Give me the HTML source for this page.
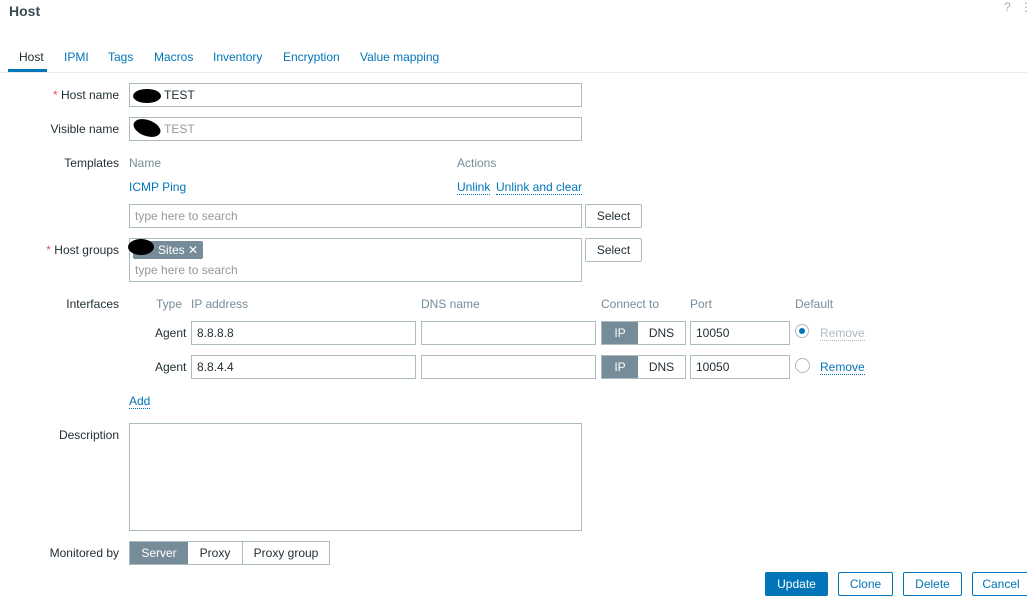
<!DOCTYPE html><html><head><style>
body{margin:0;width:1027px;height:597px;background:#fff;font-family:"Liberation Sans",sans-serif;font-size:12px;color:#1f2c33;position:relative;overflow:hidden}
.a{position:absolute;white-space:nowrap}
.in{position:absolute;border:1px solid #acbbc2;background:#fff;box-sizing:border-box;height:24px;line-height:22px;padding-left:5px}
.lbl{position:absolute;text-align:right;width:119px;left:0;line-height:14px}
.blue{color:#0275b8}
.gray{color:#768d99}
.btn{position:absolute;border:1px solid #0275b8;color:#0275b8;box-sizing:border-box;height:24px;line-height:22px;text-align:center;border-radius:2px;background:#fff}
.sel{position:absolute;border:1px solid #acbbc2;box-sizing:border-box;height:24px;line-height:22px;text-align:center;background:#fff;border-radius:2px}
.ul{border-bottom:1px dotted #0275b8}
.blob{position:absolute;background:#000;border-radius:50%}
</style></head><body>
<div class="a" style="left:9px;top:3px;font-weight:bold;font-size:14px;color:#3d4a52">Host</div>
<div class="a" style="left:1004px;top:0;color:#aaa">?</div><div class="a" style="left:1020px;top:0;color:#aaa">⋮</div>
<div class="a" style="left:0;top:72px;width:1027px;height:1px;background:#ebeef0"></div>
<div class="a" style="left:8px;top:69px;width:39px;height:3px;background:#0275b8"></div>
<div class="a" style="left:19px;top:50px">Host</div>
<div class="a blue" style="left:64px;top:50px">IPMI</div>
<div class="a blue" style="left:108px;top:50px">Tags</div>
<div class="a blue" style="left:154px;top:50px">Macros</div>
<div class="a blue" style="left:213px;top:50px">Inventory</div>
<div class="a blue" style="left:283px;top:50px">Encryption</div>
<div class="a blue" style="left:360px;top:50px">Value mapping</div>

<div class="lbl" style="top:88px"><span style="color:#e45959">*</span> Host name</div>
<div class="in" style="left:129px;top:83px;width:453px;padding-left:34px">TEST</div>
<div class="blob" style="left:133px;top:89px;width:28px;height:14px"></div>
<div class="lbl" style="top:122px">Visible name</div>
<div class="in" style="left:129px;top:117px;width:453px;padding-left:34px;color:#999">TEST</div>
<div class="blob" style="left:133px;top:120px;width:28px;height:16px;transform:rotate(20deg)"></div>

<div class="lbl" style="top:156px">Templates</div>
<div class="a gray" style="left:129px;top:156px">Name</div>
<div class="a gray" style="left:457px;top:156px">Actions</div>
<div class="a blue" style="left:129px;top:180px">ICMP Ping</div>
<div class="a blue" style="left:457px;top:180px"><span class="ul">Unlink</span></div>
<div class="a blue" style="left:496px;top:180px"><span class="ul">Unlink and clear</span></div>
<div class="in" style="left:129px;top:204px;width:453px;color:#999">type here to search</div>
<div class="sel" style="left:585px;top:204px;width:57px">Select</div>

<div class="lbl" style="top:243px"><span style="color:#e45959">*</span> Host groups</div>
<div class="in" style="left:129px;top:238px;width:453px;height:44px"></div>
<div class="a" style="left:133px;top:241px;width:70px;height:18px;background:#768d99;border-radius:2px;color:#fff;line-height:18px;padding-left:25px;box-sizing:border-box">Sites ✕</div>
<div class="blob" style="left:128px;top:239px;width:26px;height:16px"></div>
<div class="a" style="left:135px;top:263px;color:#999">type here to search</div>
<div class="sel" style="left:585px;top:238px;width:57px">Select</div>

<div class="lbl" style="top:297px">Interfaces</div>
<div class="a gray" style="left:156px;top:297px">Type</div>
<div class="a gray" style="left:191px;top:297px">IP address</div>
<div class="a gray" style="left:421px;top:297px">DNS name</div>
<div class="a gray" style="left:601px;top:297px">Connect to</div>
<div class="a gray" style="left:690px;top:297px">Port</div>
<div class="a gray" style="left:795px;top:297px">Default</div>

<div class="a" style="left:155px;top:326px">Agent</div>
<div class="in" style="left:191px;top:321px;width:225px">8.8.8.8</div>
<div class="in" style="left:421px;top:321px;width:175px"></div>
<div class="in" style="left:601px;top:321px;width:85px;padding:0"><span style="display:inline-block;width:36px;background:#768d99;color:#fff;text-align:center">IP</span><span style="display:inline-block;width:47px;text-align:center">DNS</span></div>
<div class="in" style="left:690px;top:321px;width:100px">10050</div>
<div class="a" style="left:795px;top:324px;width:14px;height:14px;border:1px solid #acbbc2;border-radius:50%;box-sizing:border-box"><div style="margin:3px;width:6px;height:6px;border-radius:50%;background:#0275b8"></div></div>
<div class="a" style="left:820px;top:326px;color:#acbbc2"><span style="border-bottom:1px dotted #acbbc2">Remove</span></div>

<div class="a" style="left:155px;top:360px">Agent</div>
<div class="in" style="left:191px;top:355px;width:225px">8.8.4.4</div>
<div class="in" style="left:421px;top:355px;width:175px"></div>
<div class="in" style="left:601px;top:355px;width:85px;padding:0"><span style="display:inline-block;width:36px;background:#768d99;color:#fff;text-align:center">IP</span><span style="display:inline-block;width:47px;text-align:center">DNS</span></div>
<div class="in" style="left:690px;top:355px;width:100px">10050</div>
<div class="a" style="left:795px;top:358px;width:15px;height:15px;border:1px solid #acbbc2;border-radius:50%;box-sizing:border-box"></div>
<div class="a blue" style="left:820px;top:360px"><span class="ul">Remove</span></div>

<div class="a blue" style="left:129px;top:394px"><span class="ul">Add</span></div>

<div class="lbl" style="top:428px">Description</div>
<div class="in" style="left:129px;top:423px;width:453px;height:108px"></div>

<div class="lbl" style="top:546px">Monitored by</div>
<div class="in" style="left:129px;top:541px;width:201px;padding:0;display:flex">
<span style="width:58px;background:#768d99;color:#fff;text-align:center">Server</span><span style="width:54px;text-align:center;border-right:1px solid #acbbc2">Proxy</span><span style="flex:1;text-align:center">Proxy group</span></div>

<div class="btn" style="left:765px;top:572px;width:63px;background:#0275b8;color:#fff">Update</div>
<div class="btn" style="left:838px;top:572px;width:55px">Clone</div>
<div class="btn" style="left:903px;top:572px;width:59px">Delete</div>
<div class="btn" style="left:972px;top:572px;width:58px">Cancel</div>
</body></html>
